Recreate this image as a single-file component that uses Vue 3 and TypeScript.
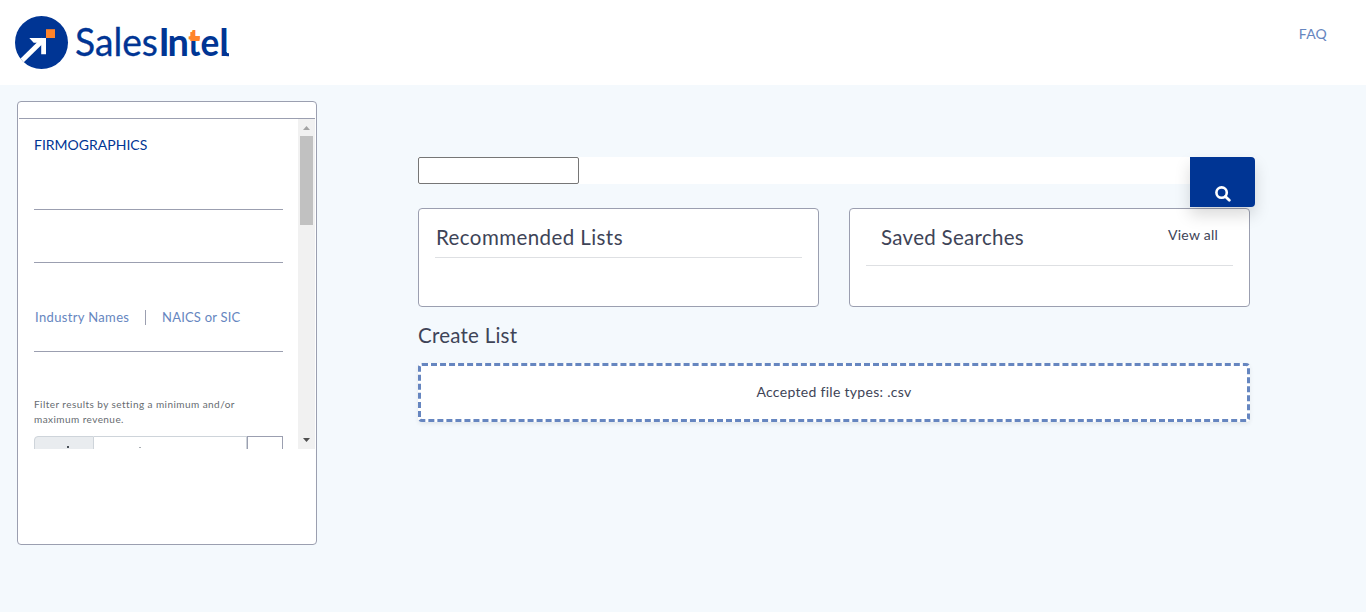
<script setup lang="ts">
const industryTabs: string[] = ['Industry Names', 'NAICS or SIC']
</script>

<template>
  <div class="page">
    <header class="topbar">
      <svg class="logo" width="216" height="56" viewBox="0 0 216 56" role="img" aria-label="SalesIntel">
        <defs>
          <clipPath id="disc"><circle cx="26.500" cy="27.500" r="26.500" /></clipPath>
          <linearGradient id="tee" gradientUnits="userSpaceOnUse" x1="0" y1="0" x2="0" y2="52">
            <stop offset="0.5" stop-color="#ff842b" />
            <stop offset="0.5" stop-color="#003594" />
          </linearGradient>
        </defs>
        <circle cx="26.500" cy="27.500" r="26.500" fill="#003594" />
        <g clip-path="url(#disc)">
          <path d="M4 48.500L28.500 24.500" stroke="#fff" stroke-width="5" fill="none" />
          <path d="M14.300 23H31V39.300H26.200V27.800H18.700Z" fill="#fff" />
        </g>
        <path d="M31 14.200h9V23h-9z" fill="#ff842b" />
        <path d="M175.300 17h4.700v4h4.500v5h-9.200z" fill="#ff842b" />
        <text class="word" x="60" y="41.300" textLength="83" lengthAdjust="spacingAndGlyphs">Sales</text>
        <text class="word heavy" x="143.500 152.500" y="41.300">In</text>
        <text class="word heavy" x="173.300" y="41.300" textLength="12.200" lengthAdjust="spacingAndGlyphs" fill="url(#tee)">t</text>
        <text class="word heavy" x="185.500" y="41.300" textLength="18.800" lengthAdjust="spacingAndGlyphs">e</text>
        <text class="word heavy" x="204.300" y="41.300">l</text>
        <path d="M208 37h3.600q.2 1.400 2.400 1.200v3.100q-6 .5-6-4.300z" fill="#003594" />
      </svg>
      <a class="faq">FAQ</a>
    </header>

    <div class="body">
      <aside class="filters">
        <div class="filters-head"></div>
        <div class="scroller">
          <div class="content">
            <h2>FIRMOGRAPHICS</h2>
            <div class="group first"></div>
            <div class="group second"></div>
            <div class="group tabs">
              <a v-for="tab in industryTabs" :key="tab">{{ tab }}</a>
            </div>
            <p class="hint">Filter results by setting a minimum and/or<br />maximum revenue.</p>
            <div class="range">
              <span class="prefix"><i></i></span>
              <span class="amount"><i></i></span>
              <span class="unit"></span>
            </div>
          </div>
          <div class="scrollbar">
            <svg width="17" height="17" viewBox="0 0 17 17"><path d="M5 11L8.500 7L12 11Z" fill="#a3a3a3" /></svg>
            <div class="thumb"></div>
            <svg class="down" width="17" height="17" viewBox="0 0 17 17"><path d="M5 6L8.500 10L12 6Z" fill="#505050" /></svg>
          </div>
        </div>
      </aside>

      <main>
        <div class="search">
          <input type="text" aria-label="Search" />
          <button aria-label="Search">
            <svg width="16" height="16" viewBox="0 0 16 16" fill="none" stroke="#fff">
              <circle cx="6.600" cy="6.600" r="5.200" stroke-width="2.600" />
              <path d="M10.400 10.400L14.300 14.300" stroke-width="2.800" stroke-linecap="round" />
            </svg>
          </button>
        </div>
        <div class="cards">
          <section class="card recommended"><h3>Recommended Lists</h3></section>
          <section class="card saved">
            <div class="saved-head"><h3>Saved Searches</h3><a>View all</a></div>
          </section>
        </div>
        <h3 class="create">Create List</h3>
        <div class="dropzone">Accepted file types: .csv</div>
      </main>
    </div>
  </div>
</template>

<style>
body { margin: 0; overflow: hidden; }
</style>

<style scoped>
* { box-sizing: border-box; }
.page { height: 612px; background: #f4f9fd; color: #3e4457; font-family: Lato, "Noto Sans", sans-serif; }
h2, h3, p { margin: 0; font-weight: 400; }
.topbar { height: 85px; background: #fff; display: flex; justify-content: space-between; padding: 15px 39px 0 15px; }
.logo { fill: #003594; }
.word { font-family: Lato, sans-serif; font-size: 38px; stroke: #003594; stroke-width: .3px; }
.heavy { font-weight: 700; stroke: none; }
.faq { color: #6686c0; font-size: 14px; line-height: 20px; margin-top: 9px; letter-spacing: .2px; }
.body { display: flex; padding: 16px 0 0 17px; }
.filters { width: 300px; height: 444px; background: #fff; border: 1px solid #9b9fb0; border-radius: 4px; flex: none; padding: 0 1px; }
.filters-head { height: 17px; border-bottom: 1px solid #9b9fb0; }
.scroller { display: flex; height: 330px; overflow: hidden; }
.content { width: 279px; padding: 15px 15px 0; flex: none; }
h2 { font-size: 14px; line-height: 22px; color: #003594; letter-spacing: 0; }
.group { border-bottom: 1px solid #9b9fb0; }
.first { height: 54px; }
.second { height: 53px; }
.tabs { height: 89px; padding: 47px 0 0 1px; display: flex; align-items: flex-start; }
.tabs a { font-size: 13px; line-height: 15px; color: #6686c0; letter-spacing: .35px; white-space: nowrap; }
.tabs a:first-child { width: 111px; border-right: 1px solid #9b9fb0; margin-right: 16px; }
.tabs a:last-child { letter-spacing: .2px; }
.hint { margin-top: 45px; font-size: 10px; line-height: 15px; color: #666b70; letter-spacing: .44px; white-space: nowrap; }
.range { margin-top: 9px; display: flex; height: 38px; }
.range span { display: block; border: 1px solid #ced4da; padding-top: 9px; }
.range i { display: block; width: 2px; height: 2px; background: #495057; }
.prefix { width: 60px; background: #e9ecef; border-radius: 4px 0 0 4px; padding-left: 32px; }
.amount { width: 153px; border-left: 0 !important; padding-left: 45px; }
.range .amount i { height: 1px; margin-top: 1px; background: #a8adb3; }
.range .unit { width: 36px; border-color: #9b9fb0; }
.scrollbar { width: 17px; background: #f1f1f1; display: flex; flex-direction: column; align-items: center; }
.scrollbar svg { display: block; flex: none; }
.thumb { width: 13px; height: 89px; background: #c1c1c1; }
.down { margin-top: auto; }
main { width: 832px; margin: 56px 0 0 101px; }
.search { height: 27px; background: #fff; display: flex; justify-content: space-between; margin-right: -5px; }
.search input { width: 161px; height: 27px; border: 1px solid #767676; border-radius: 2px; background: #fff; }
.search button { width: 65px; height: 50px; border: 0; padding: 12px 0 0; border-radius: 0 4px 4px 0; background: #003594; box-shadow: 0 8px 16px rgba(0, 0, 0, .15); display: flex; flex: none; justify-content: center; align-items: center; position: relative; z-index: 1; }
.search button svg { margin: 12px 0 0; }
.cards { display: flex; gap: 30px; margin-top: 24px; }
.card { width: 401px; height: 99px; border: 1px solid #9b9fb0; border-radius: 4px; background: #fff; padding: 0 16px; }
h3 { font-size: 20.5px; line-height: 24px; letter-spacing: .42px; }
.recommended h3 { padding: 16px 0 8px 1px; border-bottom: 1px solid #dee0e3; }
.saved-head { display: flex; justify-content: space-between; padding: 16px 15px 0; height: 57px; border-bottom: 1px solid #dee0e3; }
.saved-head h3 { letter-spacing: .3px; }
.saved-head a { font-size: 14px; line-height: 20px; letter-spacing: .25px; }
.create { margin-top: 16px; letter-spacing: .25px; }
.dropzone { height: 59px; margin-top: 16px; border: 3px dashed #6686c0; border-radius: 4px; background: #fff; box-shadow: 0 2px 4px rgba(0, 0, 0, .075); display: flex; justify-content: center; align-items: center; padding-bottom: 2px; font-size: 14px; letter-spacing: .3px; }
</style>
